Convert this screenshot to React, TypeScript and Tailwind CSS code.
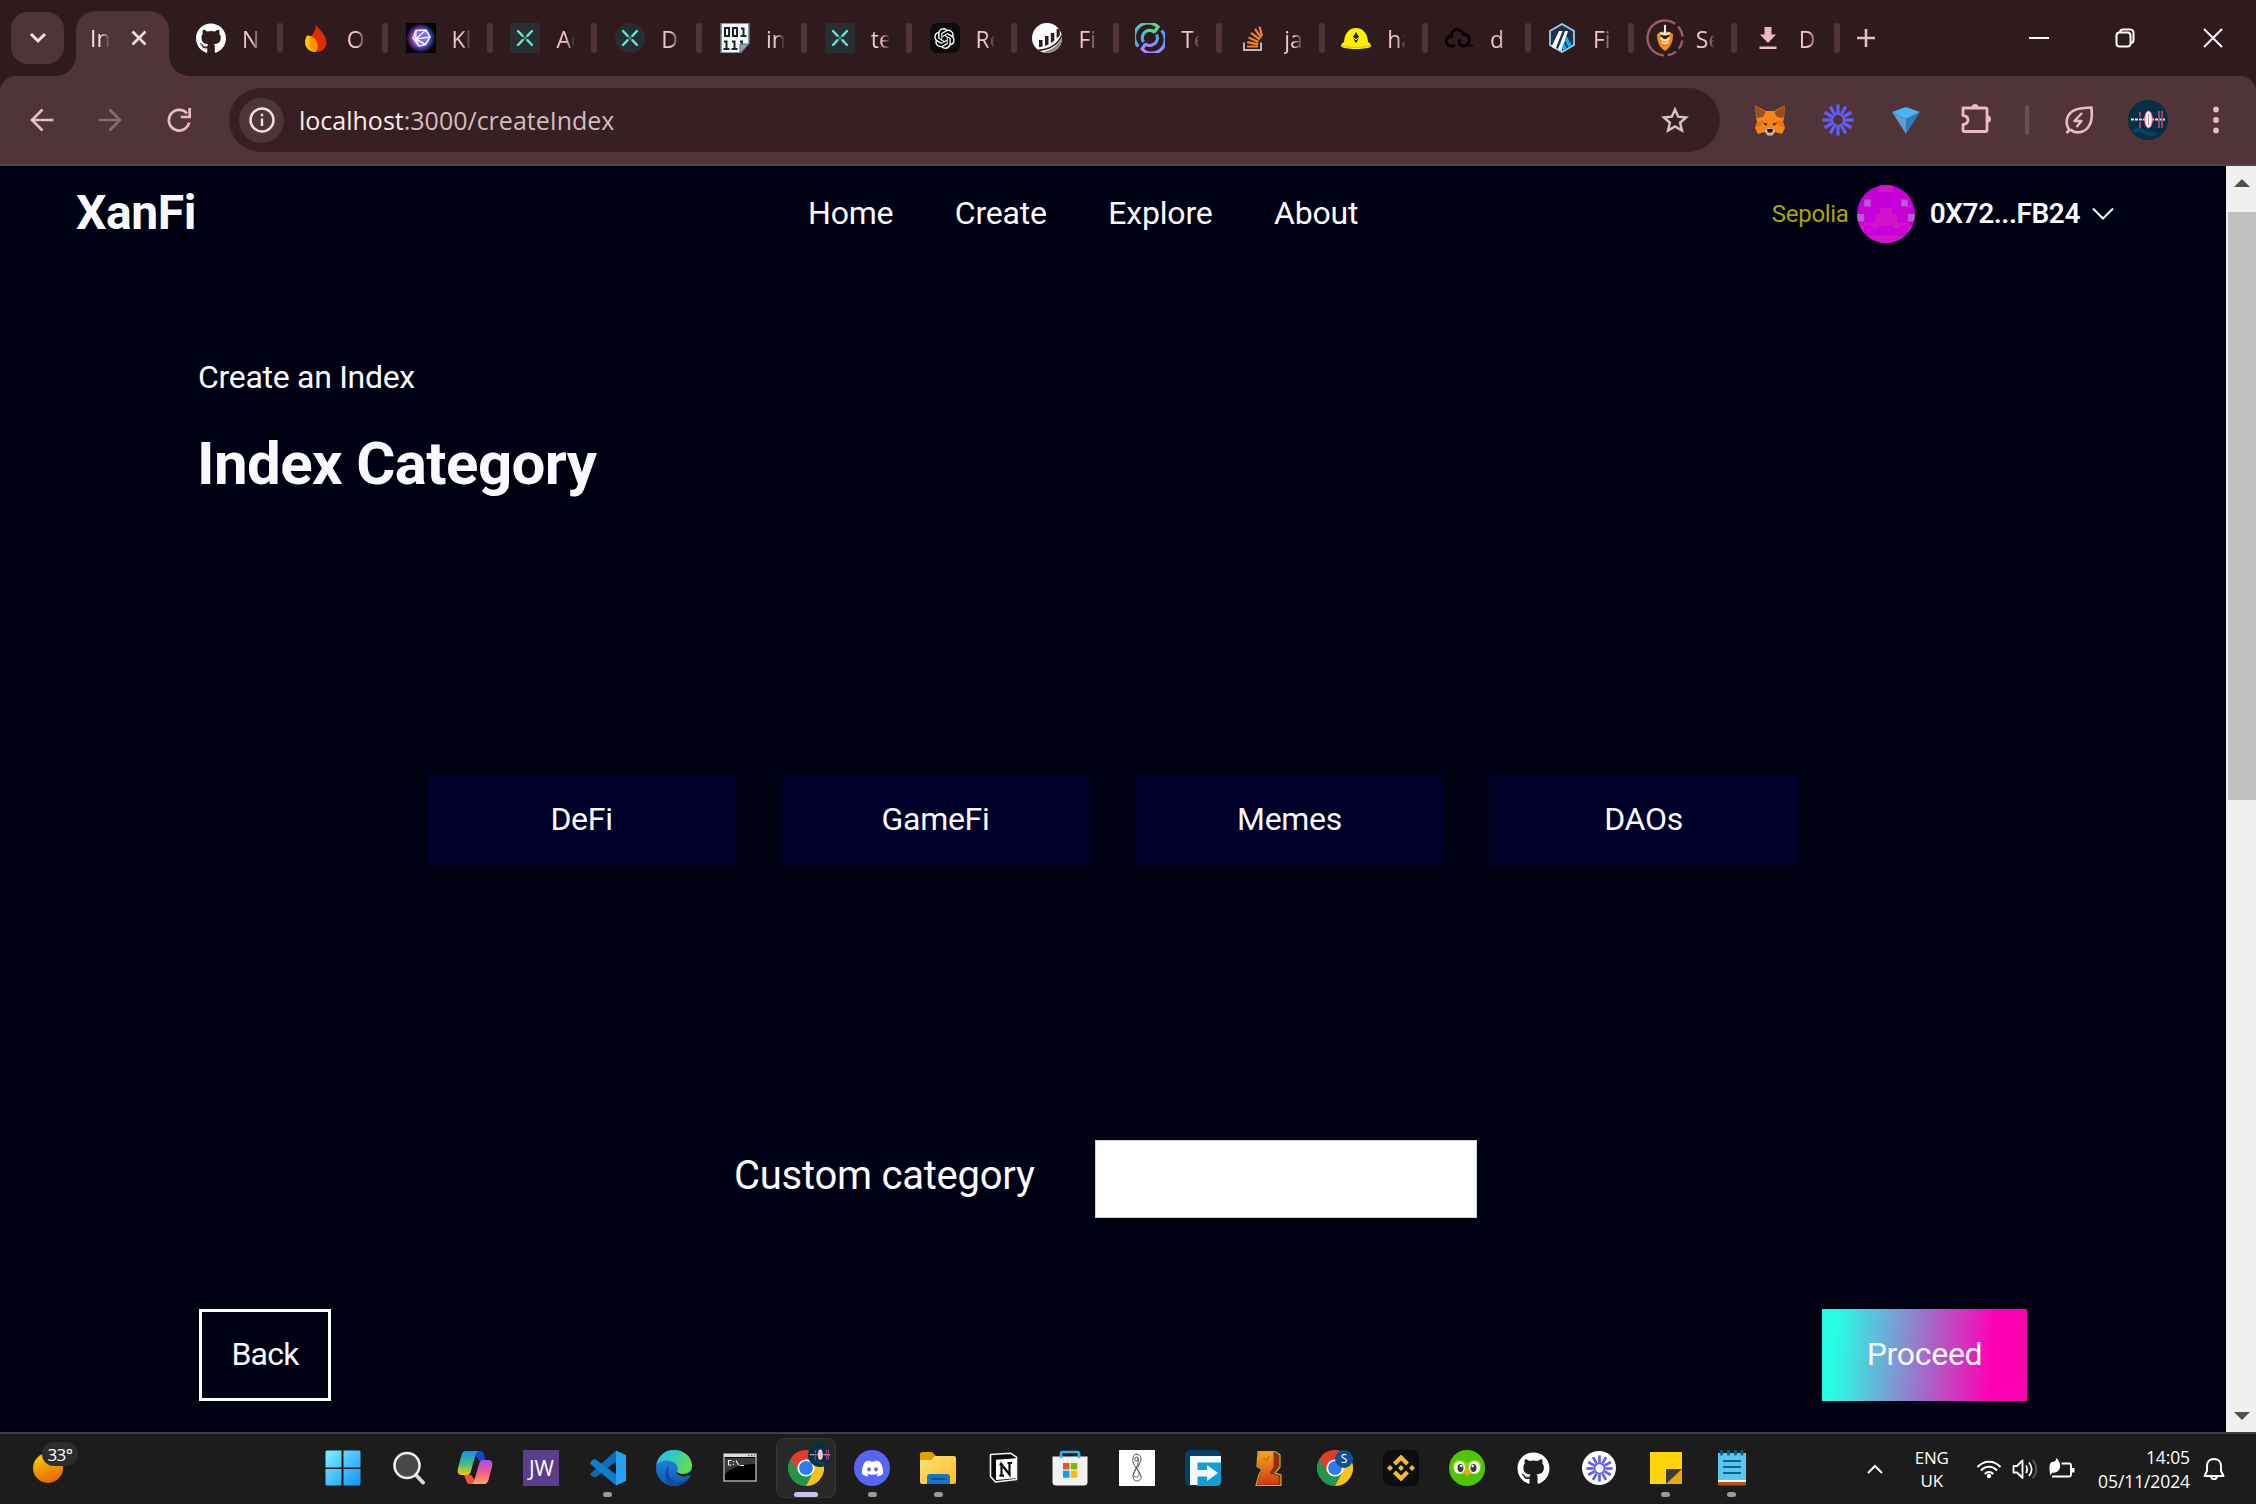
import type { ReactNode } from "react";
import { FaGithub, FaDiscord } from "react-icons/fa";
import { RiOpenaiFill } from "react-icons/ri";

/* ---------- Favicons ---------- */

const XMark = ({ round }: { round?: boolean }) => (
  <svg viewBox="0 0 30 30" className="size-[30px]">
    <rect width="30" height="30" rx={round ? 15 : 0} fill="#2a2e31" />
    <g stroke="#5eead0" strokeWidth="2.4" strokeLinecap="round">
      <path d="M8 8l4.6 4.8M22 8l-4.6 4.8M8 22l4.6-4.8M22 22l-4.6-4.8" />
    </g>
    <path d="M13.7 13.7l2.6 2.6M16.3 13.7l-2.6 2.6" stroke="#2f9c93" strokeWidth="1.4" />
  </svg>
);

const Flame = () => (
  <svg viewBox="0 0 30 30" className="size-[30px]">
    <path d="M15 2c5 6 10.500 11 10.500 17.500C25.500 25 21 29 16 29c-5 0-7.500-4-7.500-9C8.500 13 15 9 15 2z" fill="#dd2c00" />
    <path d="M6 12.500c6 0 10.500 5 10.500 10.500 0 3-.8 5-2.500 6-5 0-10-3.500-10-10 0-3 1-5 2-6.500z" fill="#ffc400" />
    <path d="M9.500 13.600c4.400 1.500 7 5.400 7 9.400 0 3-.8 5-2.500 6-3.500-1-5.500-4.500-5.500-9 0-2.500.3-4.500 1-6.400z" fill="#ff9100" />
  </svg>
);

const Crystal = () => (
  <svg viewBox="0 0 30 30" className="size-[30px]">
    <defs>
      <linearGradient id="kcore" x1="0" y1="0" x2="1" y2="0">
        <stop stopColor="#c04fe0" />
        <stop offset="1" stopColor="#3f6cf0" />
      </linearGradient>
      <radialGradient id="kfade">
        <stop offset="0.5" stopColor="#020108" stopOpacity="0" />
        <stop offset="1" stopColor="#020108" />
      </radialGradient>
    </defs>
    <rect width="30" height="30" fill="#020108" />
    <circle cx="15" cy="15" r="14.500" fill="url(#kcore)" />
    <circle cx="15" cy="15" r="15" fill="url(#kfade)" />
    <path d="M10 7.500l10-.5 4 7-4.500 7.500L13 23l-6-8z" fill="#7d6cf0" />
    <path d="M10 7.500l10-.5 4 7-4.500 7.500L13 23l-6-8zM20 7L9.500 16l10 5.500M9.500 16L24 14M10 7.500L9.500 16 13 23" fill="none" stroke="#f6efff" strokeWidth="1.600" strokeLinejoin="round" />
  </svg>
);

const Binary = () => (
  <svg viewBox="0 0 30 30" className="size-[30px]">
    <path d="M1 0h28v21l-8 9H1z" fill="#f7fafb" />
    <path d="M1 0h28v21M1 0v30h20" fill="none" stroke="#6b7c88" strokeWidth="1.500" />
    <g fill="none" stroke="#222" strokeWidth="2">
      <path d="M5 5h4v8H5zM13 5h4v8h-4zM21 5.500h2.500V13M20.500 13h6" />
      <path d="M4 18.500h2.500V26M3.500 26h6M12 18.500h2.500V26M11.500 26h6M20 18.500h2v3" />
    </g>
    <path d="M29 21h-9v9z" fill="#8fa3b0" stroke="#5b6c78" />
  </svg>
);

const OpenAI = () => (
  <span className="flex size-[30px] items-center justify-center rounded-[7px] bg-[#0c0c0c] text-white">
    <RiOpenaiFill size={25} />
  </span>
);

const Bars = () => (
  <svg viewBox="0 0 30 30" className="size-[30px]">
    <defs>
      <clipPath id="barsclip"><circle cx="15" cy="15" r="15" /></clipPath>
    </defs>
    <g clipPath="url(#barsclip)">
      <rect width="30" height="30" fill="#fff" />
      <path d="M5 30C17 29 26 24 31 13v17z" fill="#8b8c8c" />
      <path d="M4 27.500C16 27 26 22 30 12" fill="none" stroke="#2f1a1e" strokeWidth="1.600" />
      <path d="M7 17h3.500v6.500L7 24.200zM13 13h3.500v8.500l-3.500 1.500zM18.800 10h3.500v7.500l-3.500 2.700zM24.600 6h3.200v6.500l-3.200 3z" fill="#2f1a1e" />
    </g>
  </svg>
);

const Circles = () => (
  <svg viewBox="0 0 30 30" className="size-[30px]">
    <defs>
      <linearGradient id="ca" x1="1" y1="0" x2="0" y2="1"><stop stopColor="#52e38c" /><stop offset="1" stopColor="#49a6f0" /></linearGradient>
      <linearGradient id="cb" x1="1" y1="0" x2="0" y2="1"><stop stopColor="#4aa3ff" /><stop offset="1" stopColor="#b083ff" /></linearGradient>
    </defs>
    <g fill="none" strokeWidth="3.200">
      <path d="M3.500 23.500A13.400 13.400 0 0 1 23 4L19.500 9" stroke="url(#ca)" />
      <path d="M8.500 19A7.500 7.500 0 0 1 20 9.500" stroke="url(#ca)" />
      <path d="M26.500 7.500A13.400 13.400 0 0 1 7 26l3.500-5" stroke="url(#cb)" />
      <path d="M21.500 11.500A7.500 7.500 0 0 1 10 20.700" stroke="url(#cb)" />
    </g>
  </svg>
);

const StackOverflow = () => (
  <svg viewBox="0 0 30 30" className="size-[30px]">
    <path d="M6 19.500V27h17v-7.500" fill="none" stroke="#b5b9bc" strokeWidth="2" />
    <g stroke="#f48024" strokeWidth="2.200">
      <path d="M9 23.500h11M9.200 19.200l11 2.100M10.500 14.500l10 4.500M13 9.800l8.800 6.700M17 6l6.300 8.800M21.500 3.500l2.500 9.500" />
    </g>
  </svg>
);

const Hardhat = () => (
  <svg viewBox="0 0 30 30" className="size-[30px]">
    <path d="M3 20C3 11 8 5 15 5s12 6 12 15z" fill="#fff100" />
    <path d="M0 23c0-2 2-4 4-4h22c2 0 4 2 4 4 0 2-7 3-15 3S0 25 0 23z" fill="#fff100" />
    <path d="M1 22.500c6 2.500 22 2.500 28 0" fill="none" stroke="#d8c700" strokeWidth="1.200" />
    <path d="M15 9l3 5-3 2-3-2zM12 15.200l3 2 3-2-3 5z" fill="#1d1d1d" />
  </svg>
);

const BlackCloud = () => (
  <svg viewBox="0 0 30 30" className="size-[30px]" fill="none" stroke="#050203" strokeWidth="2.800" strokeLinecap="round">
    <path d="M10 23C4 24 1.500 20.500 2.500 17c.7-2.600 3-4 5-4C7 9 10 6.500 13 6.500s5.500 2 6 4.500c4 0 6.500 2.500 6.500 5.500S23 23 20 23c-4 0-6-3-4.500-5.500" />
    <path d="M20 23.500l9-.8" strokeWidth="1.200" />
  </svg>
);

const Arbitrum = () => (
  <svg viewBox="0 0 30 30" className="size-[30px]">
    <path d="M15 1l12 7v14l-12 7-12-7V8z" fill="#213147" stroke="#9dcced" strokeWidth="1.800" />
    <path d="M12 8h3.500L8.500 26l-4-2.300zM18 8h3l-6.500 20-3.500-1.700z" fill="#fff" />
    <path d="M19.500 13l5.500 9.500-3.500 2.300-3.500-7.500zM17 19.500l3 6-3.500 1.800-1.500-2.800z" fill="#12aaff" />
  </svg>
);

const Sword = () => (
  <svg viewBox="0 0 38 38" className="size-[38px] shrink-0">
    <circle cx="19" cy="19" r="17.500" fill="none" stroke="#9a5d69" strokeWidth="2.400" strokeDasharray="9 4 11 4 9 4 9 4 100" transform="rotate(-84 19 19)" />
    <path d="M19 12.500c4 0 8 2.500 8 2.500 0 8-2 13-8 17-6-4-8-9-8-17 0 0 4-2.500 8-2.500z" fill="#f08c12" />
    <path d="M14 16.500c3-1.500 7-1.500 10 0l-5 4.500z" fill="#3a1d12" />
    <path d="M19 6v9M14 13.500c3 2.500 7 2.500 10 0" fill="none" stroke="#f7ecd9" strokeWidth="2" />
    <path d="M14.500 19c3 3 6 3 9 0M15.500 22.500c2.300 2.500 4.700 2.500 7 0" fill="none" stroke="#f7e3c2" strokeWidth="1.800" />
  </svg>
);

const DownloadGlyph = () => (
  <svg viewBox="0 0 30 30" className="size-[30px]" fill="#e8bcc4">
    <path d="M11.500 4h7v7.500H23L15 20 7 11.500h4.500zM6.500 23.500h17V26h-17z" />
  </svg>
);

const TABS: { t: string; icon: ReactNode; wide?: boolean }[] = [
  { t: "N", icon: <FaGithub size={31} color="#fff" />, wide: true },
  { t: "O", icon: <Flame />, wide: true },
  { t: "Kl", icon: <Crystal />, wide: true },
  { t: "Ac", icon: <XMark />, wide: true },
  { t: "D", icon: <XMark round />, wide: true },
  { t: "in", icon: <Binary />, wide: true },
  { t: "te", icon: <XMark />, wide: true },
  { t: "Re", icon: <OpenAI /> },
  { t: "Fi", icon: <Bars /> },
  { t: "Te", icon: <Circles /> },
  { t: "ja", icon: <StackOverflow /> },
  { t: "ha", icon: <Hardhat /> },
  { t: "d", icon: <BlackCloud /> },
  { t: "Fi", icon: <Arbitrum /> },
  { t: "Se", icon: <Sword /> },
  { t: "D", icon: <DownloadGlyph /> },
];

function TabStrip() {
  return (
    <div className="flex h-[76px] items-center bg-[#2f1a1e]">
      <div className="ml-[11px] flex h-[52px] w-[53px] items-center justify-center rounded-[17px] bg-[#50343a]">
        <svg viewBox="0 0 18 12" className="h-3 w-[18px]" fill="none" stroke="#f6dfe2" strokeWidth="3">
          <path d="M2 2l7 7 7-7" />
        </svg>
      </div>
      <div className="relative ml-3 flex h-[65px] w-[93px] items-center self-end rounded-t-[20px] bg-[#50343a] pb-3">
        <span className="absolute bottom-0 -left-5 size-5 bg-[radial-gradient(circle_at_top_left,transparent_19.5px,#50343a_20px)]" />
        <span className="absolute -right-5 bottom-0 size-5 bg-[radial-gradient(circle_at_top_right,transparent_19.5px,#50343a_20px)]" />
        <span className="mt-px ml-[14px] w-[20px] overflow-hidden text-[23px] leading-8 whitespace-nowrap text-[#f6dfe2] [mask-image:linear-gradient(90deg,#000_50%,transparent)]">In</span>
        <svg viewBox="0 0 16 16" className="ml-[21px] size-4" stroke="#f6dfe2" strokeWidth="2.600">
          <path d="M1.500 1.500l13 13M14.500 1.500l-13 13" />
        </svg>
      </div>
      <div className="ml-[27px] flex">
        {TABS.map((tab, i) => (
          <div key={i} className={tab.wide ? "flex w-[104.8px] items-center" : "flex w-[102.9px] items-center"}>
            <span className="flex size-[30px] shrink-0 items-center justify-center">{tab.icon}</span>
            <span className="mt-px ml-[16px] w-[18px] overflow-hidden text-[23px] leading-8 whitespace-nowrap text-[#efc5cc] [mask-image:linear-gradient(90deg,#000_55%,transparent_105%)]">{tab.t}</span>
            <span className="ml-[17px] h-[30px] w-[6px] shrink-0 rounded-[3px] bg-[#50343a]" />
          </div>
        ))}
      </div>
      <svg viewBox="0 0 20 20" className="size-5" stroke="#e8bcc4" strokeWidth="2.600">
        <path d="M10 1v18M1 10h18" />
      </svg>
      <div className="ml-auto flex items-center">
        <svg viewBox="0 0 20 20" className="mr-[66px] size-5" stroke="#fff" strokeWidth="2"><path d="M0 10h20" /></svg>
        <svg viewBox="0 0 20 20" className="mr-[68px] size-5" fill="none" stroke="#fff" strokeWidth="2">
          <rect x="1.500" y="4.500" width="14" height="14" rx="3" />
          <path d="M5 4.500C5 2.500 6 1.500 8 1.500h7c2.500 0 3.500 1.200 3.500 3.500v7c0 2-1 3-3 3" />
        </svg>
        <svg viewBox="0 0 20 20" className="mr-[33px] size-5" stroke="#fff" strokeWidth="2"><path d="M1 1l18 18M19 1L1 19" /></svg>
      </div>
    </div>
  );
}

/* ---------- Toolbar ---------- */

const Burst = ({ className, color }: { className: string; color: string }) => (
  <svg viewBox="-16 -16 32 32" className={className} stroke={color} strokeWidth="3.200">
    {[0, 30, 60, 90, 120, 150, 180, 210, 240, 270, 300, 330].map((a) => (
      <path key={a} d="M0 -7V-15.500" transform={`rotate(${a})`} />
    ))}
    <circle r="6" fill="none" strokeWidth="2.200" />
  </svg>
);

const Fox = () => (
  <svg viewBox="0 0 32 32" className="size-8">
    <path d="M1 1l10.500 6h9L31 1l-1 13-1 4 2 6-3 6-6.500-2-3 3h-5l-3-3L4 30l-3-6 2-6-1-4z" fill="#f6851b" />
    <path d="M1 1l10.500 7L9 13l-6.500 1zM31 1l-10.500 7 2.500 5 6.500 1z" fill="#96501f" />
    <path d="M3 18l6-2-2 6-6 2zM29 18l-6-2 2 6 6 2z" fill="#e2761b" />
    <path d="M8.500 18.500l5 1-1.500 2.500zM23.500 18.500l-5 1 1.500 2.500z" fill="#3d2a1c" />
    <path d="M11 26.500l2-2h6l2 2-2.500 5h-5z" fill="#cbbcae" />
    <path d="M13 25h6l-.8 3.500h-4.400z" fill="#161616" />
  </svg>
);

const Wave = ({ className }: { className: string }) => (
  <svg viewBox="0 0 40 40" className={className}>
    <circle cx="20" cy="20" r="20" fill="#052f44" />
    <path d="M6 32C12 24 18 38 28 33" fill="none" stroke="#0b425a" strokeWidth="4" />
    <path d="M3 19.500h34" stroke="#f7d6de" strokeWidth="1.800" strokeDasharray="3 1" />
    <ellipse cx="20.500" cy="19.500" rx="3.800" ry="8.500" fill="#fbe9ee" stroke="#ef6f95" strokeWidth="1" />
    <path d="M12 12v5M12 22v6M31 11v17M34 11v17" stroke="#c9476f" strokeWidth="1.600" />
    <path d="M20.500 14v11" stroke="#c98ba0" />
  </svg>
);

function Toolbar() {
  return (
    <div className="bg-[#2f1a1e]">
      <div className="flex h-[90px] items-center rounded-t-[16px] border-b-2 border-[#514646] bg-[#50343a]">
        <svg viewBox="0 0 24 24" className="ml-[30px] size-6 shrink-0" fill="none" stroke="#e8bcc4" strokeWidth="2.600">
          <path d="M23.500 12H2.500M12.500 1.500L2 12l10.500 10.500" />
        </svg>
        <svg viewBox="0 0 24 24" className="ml-[44px] size-6 shrink-0" fill="none" stroke="#8b6c72" strokeWidth="2.600">
          <path d="M.5 12h21M11.500 1.500L22 12 11.500 22.500" />
        </svg>
        <svg viewBox="0 0 24 24" className="ml-[45px] size-6 shrink-0" fill="none" stroke="#e8bcc4" strokeWidth="2.700">
          <path d="M22.200 14.500A10.300 10.300 0 1 1 20 5.500" />
          <path d="M22.700 0v9h-9" />
        </svg>
        <div className="ml-[38px] flex h-16 w-[1491px] shrink-0 items-center rounded-full bg-[#381f23] pr-[31px] pl-[10px]">
          <span className="flex size-[45px] items-center justify-center rounded-full bg-[#50343a]">
            <svg viewBox="0 0 26 26" className="size-[26px]" fill="none" stroke="#f6dfe2" strokeWidth="2.400">
              <circle cx="13" cy="13" r="11.500" />
              <path d="M13 11.500v7.500M13 6.800v2.500" />
            </svg>
          </span>
          <span className="ml-[15px] text-[25px] leading-8 text-[#d3bdbf]"><span className="text-[#f8ebed]">localhost</span>:3000/createIndex</span>
          <svg viewBox="0 0 28 28" className="ml-auto size-7" fill="none" stroke="#d8c2c5" strokeWidth="2.500">
            <path d="M14 3.500l3.200 7.200 7.800.8-5.900 5.200 1.800 7.800L14 20.400l-6.900 4.100 1.800-7.800L3 11.500l7.800-.8z" />
          </svg>
        </div>
        <span className="ml-[34px] shrink-0"><Fox /></span>
        <Burst className="ml-[36px] size-8 shrink-0" color="#625df5" />
        <svg viewBox="0 0 28 28" className="ml-[38px] size-7 shrink-0">
          <path d="M0 6l14-5 14 5-14 7z" fill="#49b4f7" />
          <path d="M0 6l14 7v15z" fill="#5a9fd0" />
          <path d="M28 6l-14 7v15z" fill="#2f7cb8" />
        </svg>
        <svg viewBox="0 0 32 32" className="-mt-1 ml-[40px] size-8 shrink-0" fill="none" stroke="#e8bcc4" strokeWidth="2.800" strokeLinejoin="round">
          <path d="M3.500 6H25.500Q27 6 27 7.500V28Q27 29.500 25.500 29.500H4.500Q3 29.500 3 28V22.500C7.500 22 8 20 8 18s-1-4-5-4.500V6z" />
          <path d="M11.500 5.500a3.500 3.500 0 0 1 7 0zM27.500 13.500a3.500 3.500 0 0 1 0 7z" fill="#e8bcc4" stroke="none" />
        </svg>
        <span className="ml-[33px] h-[30px] w-1 shrink-0 rounded-sm bg-[#6e4f55]" />
        <svg viewBox="0 0 30 30" className="ml-[35px] size-[30px] shrink-0" fill="none" stroke="#e8bcc4" strokeWidth="2.600" strokeLinejoin="round">
          <path d="M2.500 28l3-3C1 19 2 11 8 6.500 13 2.500 20 3 27.500 2.500 28 10 28.500 17 24 22.500c-4.500 5.500-12.500 6.500-17.500 2" />
          <path d="M18 8l-7.500 8h7l-5 6" strokeWidth="2.400" />
        </svg>
        <Wave className="ml-[34px] size-10 shrink-0" />
        <svg viewBox="0 0 8 28" className="ml-[44px] h-7 w-2 shrink-0" fill="#e8bcc4">
          <circle cx="4" cy="3.500" r="2.900" /><circle cx="4" cy="14" r="2.900" /><circle cx="4" cy="24.500" r="2.900" />
        </svg>
      </div>
    </div>
  );
}

/* ---------- Web page ---------- */

const Blockie = () => (
  <svg viewBox="0 0 8 10" className="mt-px mr-[15px] ml-[8px] size-[58px] rounded-full" preserveAspectRatio="none">
    <rect width="8" height="10" fill="#c800d8" />
    <path d="M3 0h2v1.200H3zM2.500 5h3v1.500H7V7h-1v.5H5V7H3v.5H2V7H1v-.5h1.500zM3.200 4h1.600v1H3.200zM0 8.700h8V10H0zM0 7h1v2H0zM7 7h1v2H7z" fill="#d414cb" />
    <path d="M1 2.500h.9v1.200H1zM6.100 2.500H7v1.200h-.9zM0 5h1v1.300H0zM7 5h1v1.300H7z" fill="#b45cd6" />
  </svg>
);

function WebPage() {
  return (
    <div className="flex h-[1266px]">
      <main className="flex w-[2226px] flex-col bg-[#000014] font-['Roboto',sans-serif] text-[#f9f9ff]">
        <header className="flex h-[94px] shrink-0 items-center pr-[112px] pl-[76px]">
          <h1 className="w-[732px] text-[48px] leading-none font-bold tracking-[-0.4px]">XanFi</h1>
          <nav className="flex gap-[61.500px] text-[32px] leading-none tracking-[-0.2px]">
            {["Home", "Create", "Explore", "About"].map((n) => <a key={n}>{n}</a>)}
          </nav>
          <div className="ml-auto flex items-center">
            <span className="pt-px text-[24px] leading-none tracking-[-0.3px] text-[#aaa500]">Sepolia</span>
            <Blockie />
            <span className="pt-px text-[28px] leading-none font-semibold tracking-[-0.4px]">0X72...FB24</span>
            <svg viewBox="0 0 22 13" className="ml-[12px] h-[13px] w-[22px]" fill="none" stroke="#f9f9ff" strokeWidth="2">
              <path d="M1 1.500l10 10 10-10" />
            </svg>
          </div>
        </header>
        <section className="flex flex-col pr-[199px] pl-[198px]">
          <p className="mt-[93px] text-[32px] leading-[48px] tracking-[-0.3px]">Create an Index</p>
          <h2 className="-ml-px mt-[27px] text-[60px] leading-[72px] font-bold tracking-[-0.6px]">Index Category</h2>
          <div className="mt-[274px] grid grid-cols-[repeat(4,309px)] justify-center gap-x-[45px]">
            {["DeFi", "GameFi", "Memes", "DAOs"].map((c) => (
              <button key={c} className="h-[91px] bg-[#000028] pb-[2px] text-[32px] leading-none tracking-[-0.3px]">{c}</button>
            ))}
          </div>
          <div className="mt-[275px] flex h-[78px] pl-[536px]">
            <label className="w-[361px] text-[40px] leading-[71px] tracking-[-0.25px]">Custom category</label>
            <input className="h-[78px] w-[382px] border border-[#d0d0d8] bg-white text-black" />
          </div>
          <div className="mt-[91px] flex justify-between pl-px">
            <button className="h-[92px] w-[132px] border-3 border-white pb-[2px] text-[32px] leading-none tracking-[-0.8px]">Back</button>
            <button className="h-[92px] w-[205px] bg-[linear-gradient(95deg,#26ffe6_7%,#ff00b5_82%)] pb-[2px] text-[32px] leading-none tracking-[-0.3px]">Proceed</button>
          </div>
        </section>
      </main>
      <div className="flex w-[30px] flex-col items-center bg-[#f0f0f0]">
        <svg viewBox="0 0 16 8" className="mt-[13px] ml-[2px] h-2 w-4" fill="#505050"><path d="M8 0l8 8H0z" /></svg>
        <div className="mt-[25px] ml-[2px] h-[588px] w-[28px] bg-[#c1c1c1]" />
        <svg viewBox="0 0 16 8" className="mt-auto mb-[12px] ml-[2px] h-2 w-4" fill="#505050"><path d="M8 8l8-8H0z" /></svg>
      </div>
    </div>
  );
}

/* ---------- Taskbar ---------- */

const Start = () => (
  <svg viewBox="0 0 36 36" className="size-9">
    <defs><linearGradient id="st" x1="0" y1="0" x2="1" y2="1"><stop stopColor="#7df0ff" /><stop offset="1" stopColor="#0f93fb" /></linearGradient></defs>
    <path d="M2 .5h14.500v17H.5V2Q.5.5 2 .5zM18.500.5H34q1.500 0 1.500 1.500v15.500h-17zM.5 19h16v16.500H2Q.5 35.500.5 34zM18.500 19h17v15q0 1.500-1.500 1.500H18.500z" fill="url(#st)" />
  </svg>
);

const Search = () => (
  <svg viewBox="0 0 36 36" className="size-9">
    <path d="M24 24l8 8.500" stroke="#d5d8dc" strokeWidth="4" strokeLinecap="round" />
    <circle cx="16" cy="15.500" r="12.500" fill="#484848" stroke="#eceef0" strokeWidth="2.600" />
  </svg>
);

const Copilot = () => (
  <svg viewBox="0 0 36 36" className="size-9">
    <defs>
      <linearGradient id="cpa" x1="0" y1="0" x2="0" y2="1"><stop stopColor="#1b8cf0" /><stop offset="0.5" stopColor="#3cb98d" /><stop offset="1" stopColor="#f2cd10" /></linearGradient>
      <linearGradient id="cpb" x1="0" y1="0" x2="0" y2="1"><stop stopColor="#a84ef0" /><stop offset="0.5" stopColor="#f25b8c" /><stop offset="1" stopColor="#ffa55a" /></linearGradient>
    </defs>
    <path d="M15 1h8c3 0 3.500 2 4.300 5l1.200 5h-6z" fill="#1649c9" />
    <path d="M7 25h7l7 9h-8c-3 0-3.500-2-4.300-5z" fill="#f0513f" />
    <path d="M9 1h13c-2 0-3 2-4 6l-4 14c-1 3-2 4-4 4H4.500C1 25 0 22 1 18L4 7c1-4 2-6 5-6z" fill="url(#cpa)" />
    <path d="M27 34H14c2 0 3-2 4-6l4-14c1-3 2-4 4-4h5.500c3.500 0 4.500 3 3.500 7l-3 11c-1 4-2 6-5 6z" fill="url(#cpb)" />
    <path d="M17 11h5.500L18 25h-5.500c1.500-1 2-4 4.500-14z" fill="#1c1c1c" />
  </svg>
);

const VSCode = () => (
  <svg viewBox="0 0 36 36" className="size-9">
    <path d="M26 .5v11L5.500 27.500 1.500 26 0 24z" fill="#0a6eb4" />
    <path d="M3 9.500L.5 12v2L26 35.500v-11L5 9z" fill="#0b80cc" />
    <path d="M26 .5l10 4.500v26l-10 4.500z" fill="#26a0ef" />
  </svg>
);

const Edge = () => (
  <svg viewBox="0 0 36 36" className="size-9">
    <defs>
      <linearGradient id="ea" x1="0" x2="1" y1="0" y2=".4"><stop stopColor="#2fb4f0" /><stop offset="0.5" stopColor="#35c9c4" /><stop offset="1" stopColor="#62dd4e" /></linearGradient>
      <linearGradient id="eb" x1="0" x2="0" y1="0" y2="1"><stop stopColor="#2196e8" /><stop offset="1" stopColor="#0b58b0" /></linearGradient>
    </defs>
    <circle cx="18" cy="18" r="18" fill="url(#eb)" />
    <path d="M.3 15C2 6 9 0 18 0c10 0 18 7 18 15.500 0 5-4 8.500-9 8.500-4 0-6.500-1.500-6-3 1.500-2 1-6-3-8.500C12 9 4 10 .3 15z" fill="url(#ea)" />
    <path d="M14 14c-4 6-2 15 6 17.500 4 1.200 8 .3 12-3-3 5-8 7.500-14 7.500-4 0-7-3-8-7-1.500-6 .5-12 4-15z" fill="#13489c" />
    <path d="M20.500 21c-.5 2 2.500 5.500 7 5.500 3.500 0 5.500-.8 6.500-1.200L37 22v-3c-2 3-5 5-10 5-4 0-6.500-1.500-6.500-3z" fill="#1c1c1c" />
  </svg>
);

const Cmd = () => (
  <svg viewBox="0 0 36 36" className="size-9">
    <rect x="2" y="4" width="32" height="27" fill="#000" stroke="#9aa1a8" strokeWidth="1.600" />
    <path d="M2 4h32v3H2z" fill="#d5dde5" />
    <path d="M26 5.500h1.500M29 5.500h1.500M32 5.500h1" stroke="#3068c0" strokeWidth="1.500" />
    <path d="M3 8h30v6C18 14 8 18 3 24z" fill="#3a3a3a" />
    <path d="M9.500 10.500h-3v4.500h3M11.500 11v1.200M11.500 13.800V15M14 10.500l2.500 4.500M17.500 15.500H22" fill="none" stroke="#eee" strokeWidth="1.200" />
  </svg>
);

const ChromeLogo = () => (
  <svg viewBox="-18 -18 36 36" className="size-9">
    <path d="M0 0L-15.600 -9A18 18 0 0 1 15.600 -9z" fill="#e33b2e" />
    <path d="M0 0L15.600 -9A18 18 0 0 1 0 18z" fill="#fcc31e" />
    <path d="M0 0L0 18A18 18 0 0 1 -15.600 -9z" fill="#27944a" />
    <path d="M0 -8.500H15.800L7.400 4.200z" fill="#fcc31e" />
    <path d="M-15.600 -9L-7.400 4.200L0 -8.500z" fill="#e33b2e" />
    <path d="M7.400 4.200L0 18L-7.400 4.200z" fill="#27944a" />
    <circle r="8.600" fill="#fff" />
    <circle r="6.900" fill="#2a7cf0" />
  </svg>
);

const Discord = () => (
  <span className="flex size-9 items-center justify-center rounded-full bg-[#5765f2] text-white"><FaDiscord size={23} /></span>
);

const Folder = () => (
  <svg viewBox="0 0 36 36" className="size-9">
    <defs><linearGradient id="fo" x1="0" x2="1" y1="0" y2="1"><stop stopColor="#ffe27a" /><stop offset="1" stopColor="#fbbd1f" /></linearGradient></defs>
    <path d="M0 4q0-2 2-2h10l4 4v8H0z" fill="#e0a106" />
    <path d="M0 10h11l4-4h19q2 0 2 2v24q0 2-2 2H2q-2 0-2-2z" fill="url(#fo)" />
    <path d="M7 34v-7q0-3 3-3h17q3 0 3 3v7z" fill="#1176cc" />
    <path d="M12 29h14" stroke="#0a4f94" strokeWidth="2" strokeLinecap="round" />
  </svg>
);

const Notion = () => (
  <svg viewBox="0 0 36 36" className="size-9">
    <path d="M4.500 4.500l20-1.300 6 4V29.500l-21 2.500-5-5.500z" fill="#0b0b0b" stroke="#f4f4f4" strokeWidth="1.600" strokeLinejoin="round" />
    <path d="M10 9.800l20-1.500v20L10 30z" fill="#fff" />
    <path d="M15.500 25.500V14.500l8 10V13M13.500 14.500H17M13.500 25.700h4.500M21.500 13h4.500" fill="none" stroke="#0b0b0b" strokeWidth="2.200" />
  </svg>
);

const Store = () => (
  <svg viewBox="0 0 36 36" className="size-9">
    <path d="M9 8V3.500Q9 2 10.500 2h15Q27 2 27 3.500V8" fill="none" stroke="#2db3f1" strokeWidth="2.600" />
    <path d="M.5 6.500h35V32q0 3.500-3.500 3.500H4Q.5 35.500.5 32z" fill="#f1f1f1" />
    <path d="M9 5v3M27 5v3" stroke="#2db3f1" strokeWidth="2.600" />
    <path d="M11 13h6.500v6.500H11z" fill="#f25022" /><path d="M18.700 13h6.500v6.500h-6.500z" fill="#7fba00" />
    <path d="M11 20.700h6.500v7H11z" fill="#00a4ef" /><path d="M18.700 20.700h6.500v7h-6.500z" fill="#ffb900" />
  </svg>
);

const Sketch = () => (
  <svg viewBox="0 0 36 36" className="size-9" fill="none" stroke="#555" strokeWidth="1">
    <rect width="36" height="36" fill="#fff" stroke="none" />
    <path d="M17 4c3 0 5 2 5 5 0 5-7 11-8 17-.5 3 2 5 4 5s5-2 4-5c-1-5-7-9-8-14-.6-3 0-7 3-8z" />
    <path d="M17.500 7c2 0 3 6-1 12-4 7-2 8 1 8 4 0 3-6-1-10" />
    <circle cx="17.500" cy="9" r="1.800" />
  </svg>
);

const FApp = () => (
  <svg viewBox="0 0 36 36" className="size-9">
    <rect width="36" height="36" rx="5" fill="#053f68" />
    <path d="M12 12h24v19q0 5-5 5H12z" fill="#129fd8" />
    <path d="M5 35V6h31v6.500H12.500v7.500H22v-5l11 8-11 8v-4.500h-9.500V35z" fill="#f5f9fc" />
  </svg>
);

const Stone = () => (
  <svg viewBox="0 0 36 36" className="size-9">
    <defs><linearGradient id="so" x1="0" y1="0" x2="0" y2="1"><stop stopColor="#f3a422" /><stop offset="1" stopColor="#d63a0c" /></linearGradient></defs>
    <path d="M7 1.500h17l5 3.500V17l-5 6 6 2v10.500H5l3-11 3-5-5-3z" fill="#8f2f0c" stroke="#c8b21d" strokeWidth="1.200" />
    <path d="M7.500 2h15v14.500l-4 7 9 2.500v8.500H6.500l2.500-10 3.500-5.500-6-2.500z" fill="url(#so)" />
    <path d="M12 8l3 2M18 6l-2 5M14 28l6 1" stroke="#b06010" strokeWidth="1" />
  </svg>
);

const Binance = () => (
  <svg viewBox="0 0 36 36" className="size-9">
    <rect width="36" height="36" rx="7" fill="#0b0e11" />
    <path d="M18 4.500l8 8-3 3-5-5-5 5-3-3zM18 31.500l8-8-3-3-5 5-5-5-3 3zM18 15l3 3-3 3-3-3zM7 15l3 3-3 3-3-3zM29 15l3 3-3 3-3-3z" fill="#f3ba2f" />
  </svg>
);

const Duo = () => (
  <svg viewBox="0 0 36 36" className="size-9">
    <circle cx="18" cy="18" r="18" fill="#4fc502" />
    <path d="M4 14c2-5 9-5 14-1 5-4 12-4 14 1 1 6-2 10-7 10H11c-5 0-8-4-7-10z" fill="#86dd17" />
    <ellipse cx="10.500" cy="17.500" rx="5.500" ry="6.200" fill="#fff" /><ellipse cx="25.500" cy="17.500" rx="5.500" ry="6.200" fill="#fff" />
    <ellipse cx="11.500" cy="18" rx="3" ry="4" fill="#3c3c3c" /><ellipse cx="24.500" cy="18" rx="3" ry="4" fill="#3c3c3c" />
    <circle cx="12.300" cy="16" r="1.200" fill="#fff" /><circle cx="23.700" cy="16" r="1.200" fill="#fff" />
    <path d="M14.500 21.500c2-2 5-2 7 0l-2.500 4.500h-2z" fill="#fb9c14" />
  </svg>
);

const Sticky = () => (
  <svg viewBox="0 0 36 36" className="size-9">
    <path d="M2 2h32v32H2z" fill="#fdd508" />
    <path d="M18 34l16-15v15z" fill="#e5a90c" />
    <path d="M18 19h16L18 34z" fill="#3b3b3b" />
  </svg>
);

const Notepad = () => (
  <svg viewBox="0 0 36 36" className="size-9">
    <path d="M4 28h28v6q0 1.500-1.500 1.500h-25Q4 35.500 4 34z" fill="#b3540f" />
    <path d="M4 27h28v5H4z" fill="#f4f4f4" />
    <path d="M4 3h28v27H4z" fill="#5cc6ea" />
    <path d="M7.500 1v3M14.500 1v3M21.500 1v3M28 1v3" stroke="#0a5f86" strokeWidth="3" strokeLinecap="round" />
    <path d="M9 11h18M9 17h18M9 23h18" stroke="#08658f" strokeWidth="2" />
  </svg>
);

const APPS: { icon: ReactNode; dot?: boolean; active?: boolean; badge?: ReactNode }[] = [
  { icon: <Start /> },
  { icon: <Search /> },
  { icon: <Copilot /> },
  { icon: <span className="flex size-9 items-center justify-center bg-[#5c3d8c] text-[21px] leading-none text-white">JW</span> },
  { icon: <VSCode />, dot: true },
  { icon: <Edge /> },
  { icon: <Cmd /> },
  { icon: <ChromeLogo />, active: true, badge: <span className="absolute top-[4px] right-[3px]"><Wave className="size-6" /></span> },
  { icon: <Discord />, dot: true },
  { icon: <Folder />, dot: true },
  { icon: <Notion /> },
  { icon: <Store /> },
  { icon: <Sketch /> },
  { icon: <FApp /> },
  { icon: <Stone /> },
  { icon: <ChromeLogo />, badge: <span className="absolute top-[12px] right-[12px] flex size-[18px] items-center justify-center rounded-full bg-[#0a539a] text-[12px] leading-none text-white">S</span> },
  { icon: <Binance /> },
  { icon: <Duo /> },
  { icon: <FaGithub size={33} color="#fff" /> },
  { icon: <span className="flex size-[34px] items-center justify-center rounded-full bg-white"><Burst className="size-[27px]" color="#625df5" /></span> },
  { icon: <Sticky />, dot: true },
  { icon: <Notepad />, dot: true },
];

function Taskbar() {
  return (
    <footer className="flex h-[72px] items-center border-t-2 border-[#3f3f3f] bg-[#1c1c1c] text-white">
      <div className="relative h-full w-[310px]">
        <span className="absolute top-[19px] left-[33px] size-[30px] rounded-full bg-[linear-gradient(160deg,#ffd400,#e05a00)]" />
        <span className="absolute top-[8px] left-[42px] flex h-6 w-9 items-center justify-center rounded-full bg-[#2d2d2d] text-[17px] leading-none tracking-[-0.5px]">33°</span>
      </div>
      <div className="flex h-full">
        {APPS.map((a, i) => (
          <div key={i} className="flex h-full w-[66.140px] justify-center">
            <div className={a.active ? "relative mt-1 flex h-[60px] w-[60px] flex-col items-center rounded-[8px] border border-[#363636] bg-[#282828] pt-[11px]" : "relative mt-1 flex h-[60px] w-[60px] flex-col items-center pt-3"}>
              <span className="flex size-9 shrink-0 items-center justify-center">{a.icon}</span>
              {a.badge}
              {a.dot && <span className="mt-[6px] h-[5px] w-[9px] rounded-full bg-[#9a9a9a]" />}
              {a.active && <span className="mt-[6px] h-[5px] w-6 rounded-full bg-[#c9c0ee]" />}
            </div>
          </div>
        ))}
      </div>
      <svg viewBox="0 0 16 10" className="ml-[102px] h-[10px] w-4" fill="none" stroke="#fff" strokeWidth="2"><path d="M1 9l7-7 7 7" /></svg>
      <div className="ml-[29px] w-[40px] text-center text-[17px] leading-[23px] tracking-[-0.2px]">ENG<br />UK</div>
      <svg viewBox="0 0 26 20" className="ml-[24px] h-5 w-[26px]" fill="none" stroke="#fff" strokeWidth="2">
        <path d="M1.500 8C8 1 18 1 24.500 8M5 11.500c4.500-5 11.500-5 16 0M8.700 15c2.600-2.800 6-2.800 8.600 0" /><circle cx="13" cy="17" r="2.200" fill="#fff" stroke="none" />
      </svg>
      <svg viewBox="0 0 26 22" className="ml-[10px] h-[22px] w-[26px]" fill="none" stroke="#fff" strokeWidth="1.800" strokeLinejoin="round">
        <path d="M1.500 8v6.500h3.500L10.500 20V2.500L5 8zM14 7.500c1.500 2 1.500 5.500 0 7.500M17 4.500c3.500 4 3.500 9.500 0 13.500" /><path d="M20.500 2c5 5.500 5 13 0 18.500" stroke="#5a5a5a" />
      </svg>
      <svg viewBox="0 0 26 22" className="-mt-[3px] ml-[11px] h-[22px] w-[26px]" fill="none" stroke="#fff" strokeWidth="1.900">
        <path d="M12.500 6.500H20q2 0 2 2v9q0 2-2 2H3" /><path d="M22.500 11h3v4.500h-3z" fill="#fff" stroke="none" />
        <path d="M7.500 1c4 4 4.500 9 2.500 12-1.500 2.500-5 3-7 2.500L1.500 18.500C0 12 0 6 3 5c2 0 4-1 4.500-4z" fill="#fff" stroke="none" />
      </svg>
      <div className="ml-auto text-right text-[17.500px] leading-6 tracking-[-0.1px]">14:05<br />05/11/2024</div>
      <svg viewBox="0 0 22 24" className="mr-[31px] ml-[13px] h-6 w-[22px]" fill="none" stroke="#fff" strokeWidth="1.900" strokeLinejoin="round">
        <path d="M11 2C6.500 2 4 5 4 9v5l-2.500 5h19L18 14V9c0-4-2.500-7-7-7zM8 19.500c.5 3.500 5.500 3.500 6 0" />
      </svg>
    </footer>
  );
}

export default function App() {
  return (
    <div className="h-[1504px] w-[2256px] overflow-hidden font-['Open_Sans',sans-serif]">
      <TabStrip />
      <Toolbar />
      <WebPage />
      <Taskbar />
    </div>
  );
}
